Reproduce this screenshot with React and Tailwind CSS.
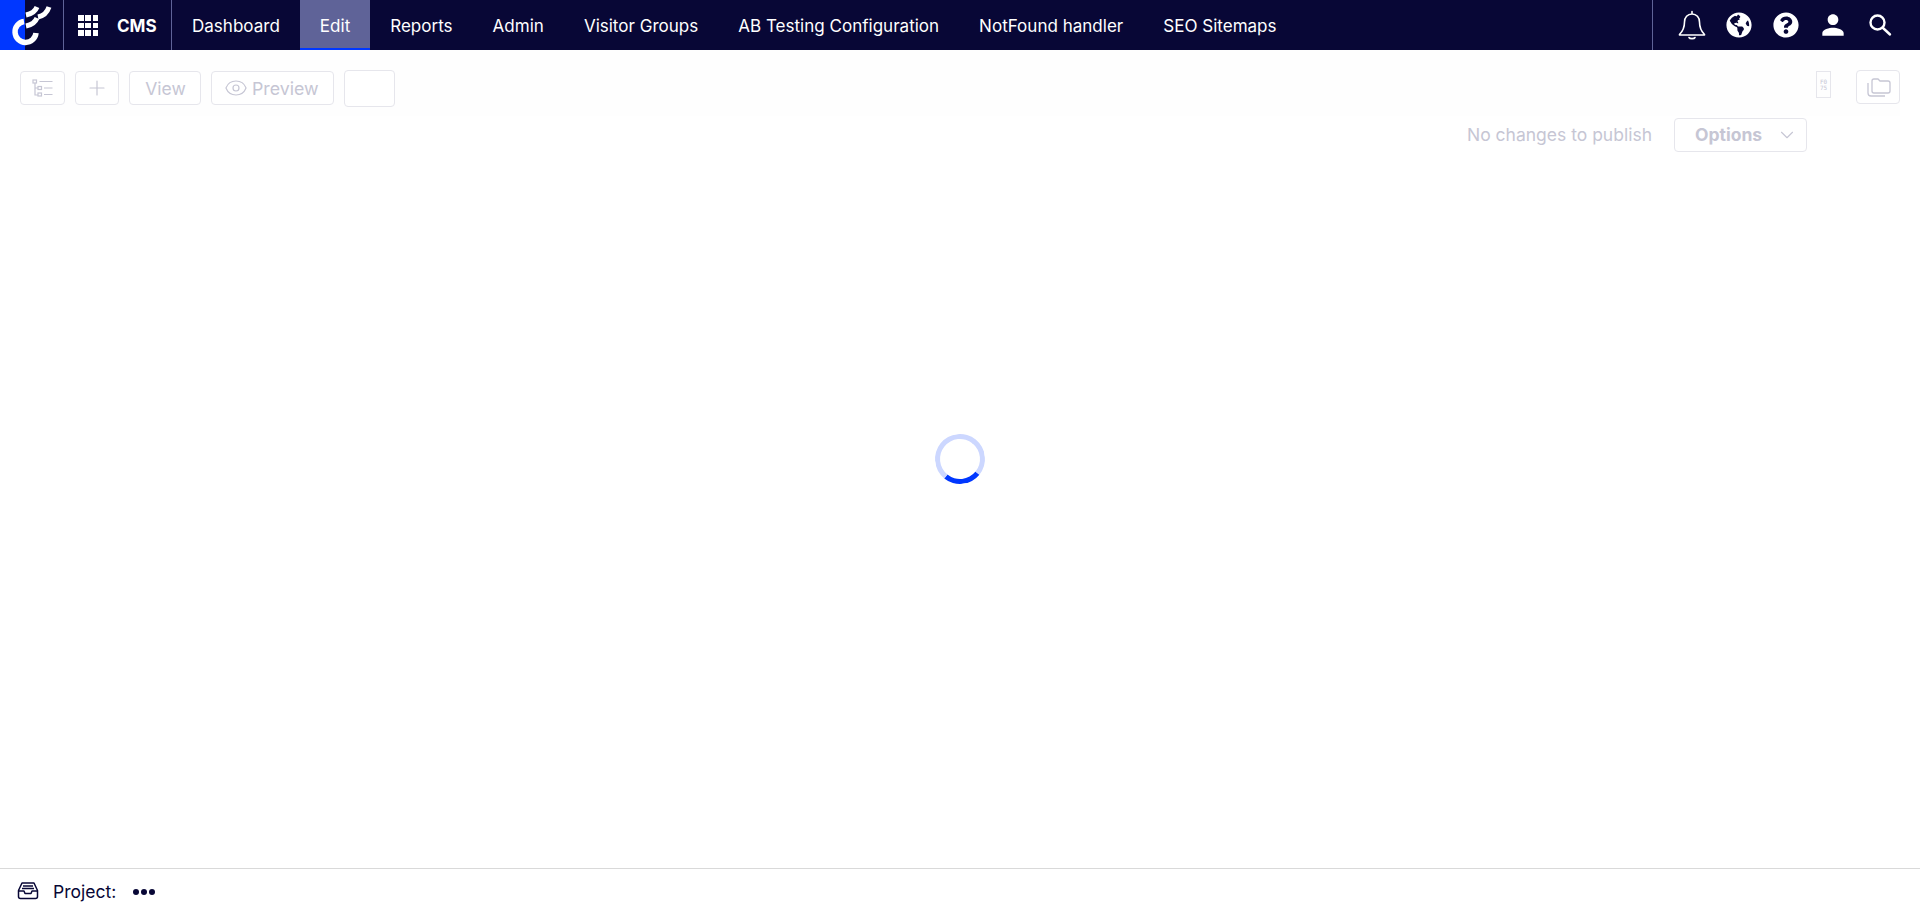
import React from 'react';
import { Eye, Plus, ChevronDown } from 'lucide-react';
import { FaGlobeAmericas, FaQuestionCircle } from 'react-icons/fa';
import { MdPerson } from 'react-icons/md';

const navItems = ['Dashboard', 'Edit', 'Reports', 'Admin', 'Visitor Groups', 'AB Testing Configuration', 'NotFound handler', 'SEO Sitemaps'];

function Logo() {
  return (
    <svg width="63" height="50" viewBox="0 0 63 50" fill="none" stroke="#fff" strokeWidth="5.500" className="absolute left-0 top-0">
      <path d="M24 21.500 A10.500 10.500 0 1 0 36 33" />
      <path d="M26 15 C31 14 35 12 37 7" strokeWidth="5" />
      <path d="M38 17 C43 16 47 13 49 7" strokeWidth="5" />
      <path d="M26 26 C31 25 35 23 37 18" strokeWidth="5" />
    </svg>
  );
}

function AppGrid() {
  return (
    <div className="grid grid-cols-3 gap-[2px] w-5 h-5">
      {Array.from({ length: 9 }).map((_, i) => (
        <div key={i} className="bg-white w-[5.500px] h-[5.500px]" />
      ))}
    </div>
  );
}

function BellIcon() {
  return (
    <svg width="28" height="30" viewBox="0 0 28 30" fill="none" stroke="#fff" strokeWidth="1.600" strokeLinejoin="round" strokeLinecap="round">
      <path d="M14 1.500v2.500M14 4c-4.500 0-7.500 3.500-7.500 8 0 6-1.500 9-5 12.500v.500h25v-.500c-3.500-3.500-5-6.500-5-12.500 0-4.500-3-8-7.500-8z" />
      <path d="M11 27.500c.800 1.500 5.200 1.500 6 0" />
    </svg>
  );
}

function SearchIcon() {
  return (
    <svg width="24" height="24" viewBox="0 0 24 24" fill="none" stroke="#fff" strokeWidth="2.400" strokeLinecap="round">
      <circle cx="9.500" cy="9.500" r="7" />
      <path d="M15 15l7 6.500" />
    </svg>
  );
}

function TreeIcon() {
  return (
    <svg width="22" height="18" viewBox="0 0 22 18" fill="none" stroke="#c6c6d4" strokeWidth="1.200">
      <rect x="1" y="1" width="3.500" height="3" />
      <rect x="6" y="7.500" width="3.500" height="3" />
      <rect x="6" y="14" width="3.500" height="3" />
      <path d="M3 4v12h3M3 9h3M7.500 2.500h13M12 9h8.500M12 15.500h8.500" />
    </svg>
  );
}

function FoldersIcon() {
  return (
    <svg width="26" height="22" viewBox="0 0 26 22" fill="none" stroke="#c6c6d4" strokeWidth="1.300">
      <path d="M7 15V5a2 2 0 0 1 2-2h4l2 2h8a2 2 0 0 1 2 2v8a2 2 0 0 1-2 2H9a2 2 0 0 1-2-2z" />
      <path d="M3 7v10a3 3 0 0 0 3 3h14" />
    </svg>
  );
}

function InboxIcon() {
  return (
    <svg width="22" height="18" viewBox="0 0 22 18" fill="none" stroke="#080736" strokeWidth="1.500" strokeLinejoin="round">
      <path d="M5 1h12l3.500 7.500v6a2 2 0 0 1-2 2h-15a2 2 0 0 1-2-2v-6z" />
      <path d="M1.500 9H7l1 2.500h6l1-2.500h5.500" />
      <path d="M6 4h10M5 6.500h12" />
    </svg>
  );
}

const toolbarBtn = 'h-[34px] flex items-center justify-center rounded border border-[#e6e6ec] bg-white text-[#c6c6d4]';

export default function App() {
  return (
    <div className="h-[913px] flex flex-col bg-white overflow-hidden font-['Inter',sans-serif] text-[17.500px] text-[#080736]">
      <header className="h-[50px] flex items-stretch bg-[#080736] text-white text-[17.050px] shrink-0">
        <div className="w-[64px] relative border-r border-[#5f6398] shrink-0 bg-[linear-gradient(90deg,#0037ff_25px,#080736_25px)]">
          <Logo />
        </div>
        <div className="w-[108px] border-r border-[#5f6398] flex items-center gap-[19px] pl-[14px] shrink-0">
          <AppGrid />
          <span className="font-bold pt-[2px]">CMS</span>
        </div>
        <nav className="flex items-stretch flex-1">
          {navItems.map((item) => (
            <div
              key={item}
              className={item === 'Edit'
                ? 'px-5 flex items-center bg-[#5f6398] border-b-2 border-[#0037ff] pt-[4px]'
                : 'px-5 flex items-center pt-[2px]'}
            >
              {item}
            </div>
          ))}
        </nav>
        <div className="w-[268px] border-l border-[#5f6398] flex items-center pl-[15px] shrink-0">
          <div className="w-[47px] flex justify-center"><BellIcon /></div>
          <div className="w-[47px] flex justify-center"><FaGlobeAmericas size={26} /></div>
          <div className="w-[47px] flex justify-center"><FaQuestionCircle size={26} /></div>
          <div className="w-[47px] flex justify-center"><MdPerson size={32} /></div>
          <div className="w-[47px] flex justify-center"><SearchIcon /></div>
        </div>
      </header>

      <div className="flex-1 flex flex-col">
        <div className="mx-5 h-[66px] flex items-start justify-between bg-[#fefefe] pt-[21px]">
          <div className="flex items-start gap-[10px]">
            <div className={`${toolbarBtn} w-[45px] border-[#d6d6e0]`}><TreeIcon /></div>
            <div className={`${toolbarBtn} w-[44px]`}><Plus size={24} strokeWidth={1.200} /></div>
            <div className={`${toolbarBtn} w-[72px] pl-px`}><span className="pt-[2px]">View</span></div>
            <div className={`${toolbarBtn} w-[123px] justify-start pl-[12px] gap-[4px]`}><Eye size={24} strokeWidth={1.200} /><span className="pt-[2px] text-[17.800px]">Preview</span></div>
            <div className={`${toolbarBtn} w-[51px] h-[37px] -mt-px`} />
          </div>
          <div className="flex items-start gap-[25px] -mt-px">
            <div className="w-[15px] h-[27px] mt-px border border-[#e6e6ec] flex flex-col items-center justify-center font-['DejaVu_Sans_Mono',monospace] text-[6px] leading-[6px] text-[#c6c6d4]">
              <span>F0</span>
              <span>75</span>
            </div>
            <div className={`${toolbarBtn} w-[44px] border-[#d6d6e0]`}><FoldersIcon /></div>
          </div>
        </div>

        <div className="flex items-center justify-end gap-[22px] pr-[113px] mt-[2px]">
          <span className="text-[#c6c6d4]">No changes to publish</span>
          <div className="h-[34px] w-[133px] flex items-center justify-between rounded border border-[#e6e6ec] bg-white text-[#c6c6d4] pl-[20px] pr-[8px]">
            <span className="font-bold">Options</span>
            <ChevronDown size={22} strokeWidth={1.200} />
          </div>
        </div>

        <div className="flex-1 flex items-center justify-center pb-[102px]">
          <div className="w-[50px] h-[50px] rounded-full border-[5px] border-[#ccd7ff] border-b-[#0037ff] -rotate-[6deg]" />
        </div>
      </div>

      <footer className="h-[45px] shrink-0 border-t border-[#d9d9d9] flex items-center pl-[17px]">
        <InboxIcon />
        <span className="ml-[14px] pt-[2px]">Project:</span>
        <div className="ml-[17px] flex gap-[2px] pt-[2px]">
          <div className="w-[6px] h-[6px] rounded-full bg-[#080736]" />
          <div className="w-[6px] h-[6px] rounded-full bg-[#080736]" />
          <div className="w-[6px] h-[6px] rounded-full bg-[#080736]" />
        </div>
      </footer>
    </div>
  );
}
